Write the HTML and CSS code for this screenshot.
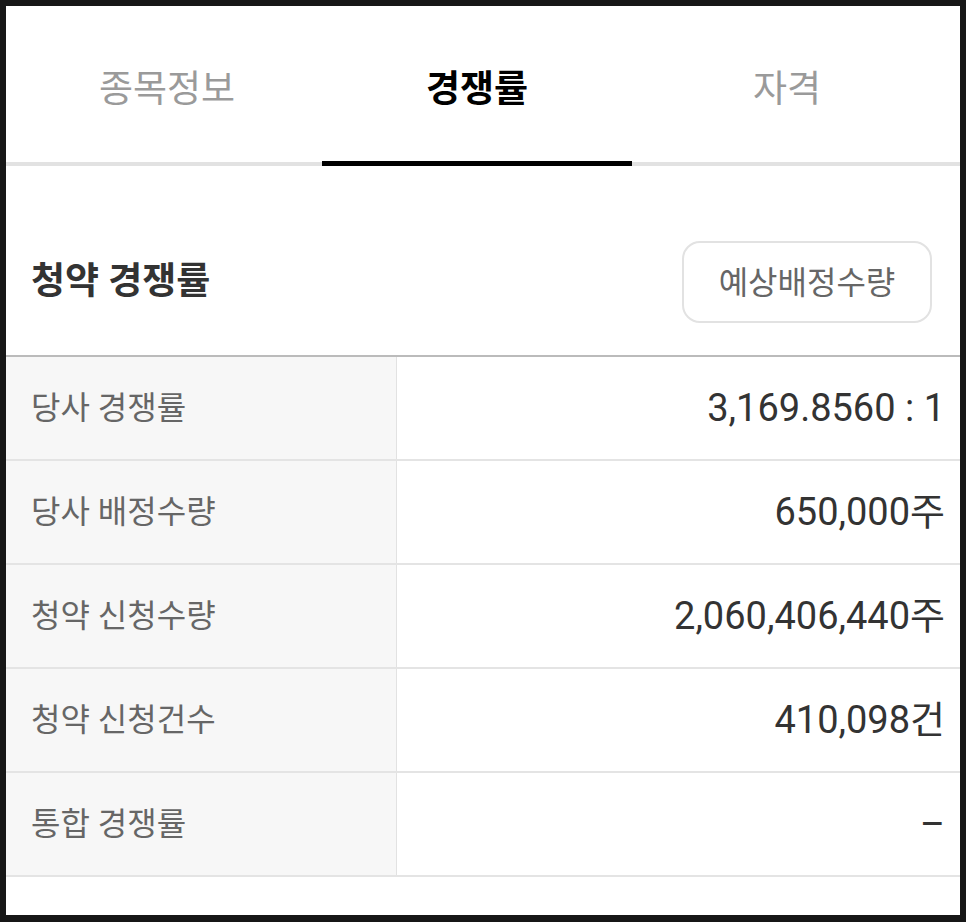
FILE: index.html
```html
<html>
    <head>
        <meta charset="UTF-8" name="viewport" content="width=device-width, initial-scale=1.0">
        <link rel="stylesheet" href="styles.css">
    </head>
    <body>
        <div class="skjerm">
            <div class="faner">
                <div class="fane">종목정보</div>
                <div class="fane aktiv">경쟁률</div>
                <div class="fane">자격</div>
            </div>

            <div class="seksjon">
                <h2 class="tittel">청약 경쟁률</h2>
                <button class="knapp">예상배정수량</button>
            </div>

            <div class="tabell">
                <div class="rad">
                    <div class="navn">당사 경쟁률</div>
                    <div class="verdi">3,169.8560 : 1</div>
                </div>
                <div class="rad">
                    <div class="navn">당사 배정수량</div>
                    <div class="verdi">650,000주</div>
                </div>
                <div class="rad">
                    <div class="navn">청약 신청수량</div>
                    <div class="verdi">2,060,406,440주</div>
                </div>
                <div class="rad">
                    <div class="navn">청약 신청건수</div>
                    <div class="verdi">410,098건</div>
                </div>
                <div class="rad">
                    <div class="navn">통합 경쟁률</div>
                    <div class="verdi">–</div>
                </div>
            </div>
        </div>
    </body>
</html>
```

FILE: styles.css
```css
html {
    background: #171717;
}

body {
    margin: 0;
    padding: 6px 6px 7px 6px;
    font-family: Roboto, "Noto Sans CJK KR", sans-serif;
}

.skjerm {
    background: white;
    height: 909px;
}

/* tabs on top */
.faner {
    display: flex;
    padding-left: 6px;
    border-bottom: 4px solid #e2e2e2;
}

.fane {
    position: relative;
    width: 310px;
    height: 144px;
    padding-top: 12px;
    line-height: 144px;
    text-align: center;
    font-size: 37px;
    color: #9a9a9a;
}

.fane.aktiv {
    color: black;
    font-weight: bold;
}

.fane.aktiv::after {
    content: "";
    position: absolute;
    left: 0;
    right: 0;
    bottom: -4px;
    height: 5px;
    background: black;
}

.seksjon {
    display: flex;
    align-items: center;
    justify-content: space-between;
    padding: 75px 28px 32px 25px;
    border-bottom: 2px solid #bbbbbb;
}

.tittel {
    margin: 0 0 8px 0;
    font-size: 37px;
    font-weight: bold;
    color: #333;
}

.knapp {
    width: 250px;
    height: 82px;
    border: 2px solid #e2e2e2;
    border-radius: 18px;
    background: white;
    font-family: Roboto, "Noto Sans CJK KR", sans-serif;
    font-size: 32px;
    color: #666;
    padding: 0 0 4px 0;
}

.rad {
    display: flex;
    height: 102px;
    border-bottom: 2px solid #e4e4e4;
}

.navn {
    width: 365px;
    padding-left: 25px;
    background: #f7f7f7;
    border-right: 1px solid #e2e2e2;
    line-height: 102px;
    font-size: 32px;
    color: #666;
}

.verdi {
    flex: 1;
    padding-right: 15px;
    text-align: right;
    line-height: 102px;
    font-size: 38px;
    color: #333;
}
```
